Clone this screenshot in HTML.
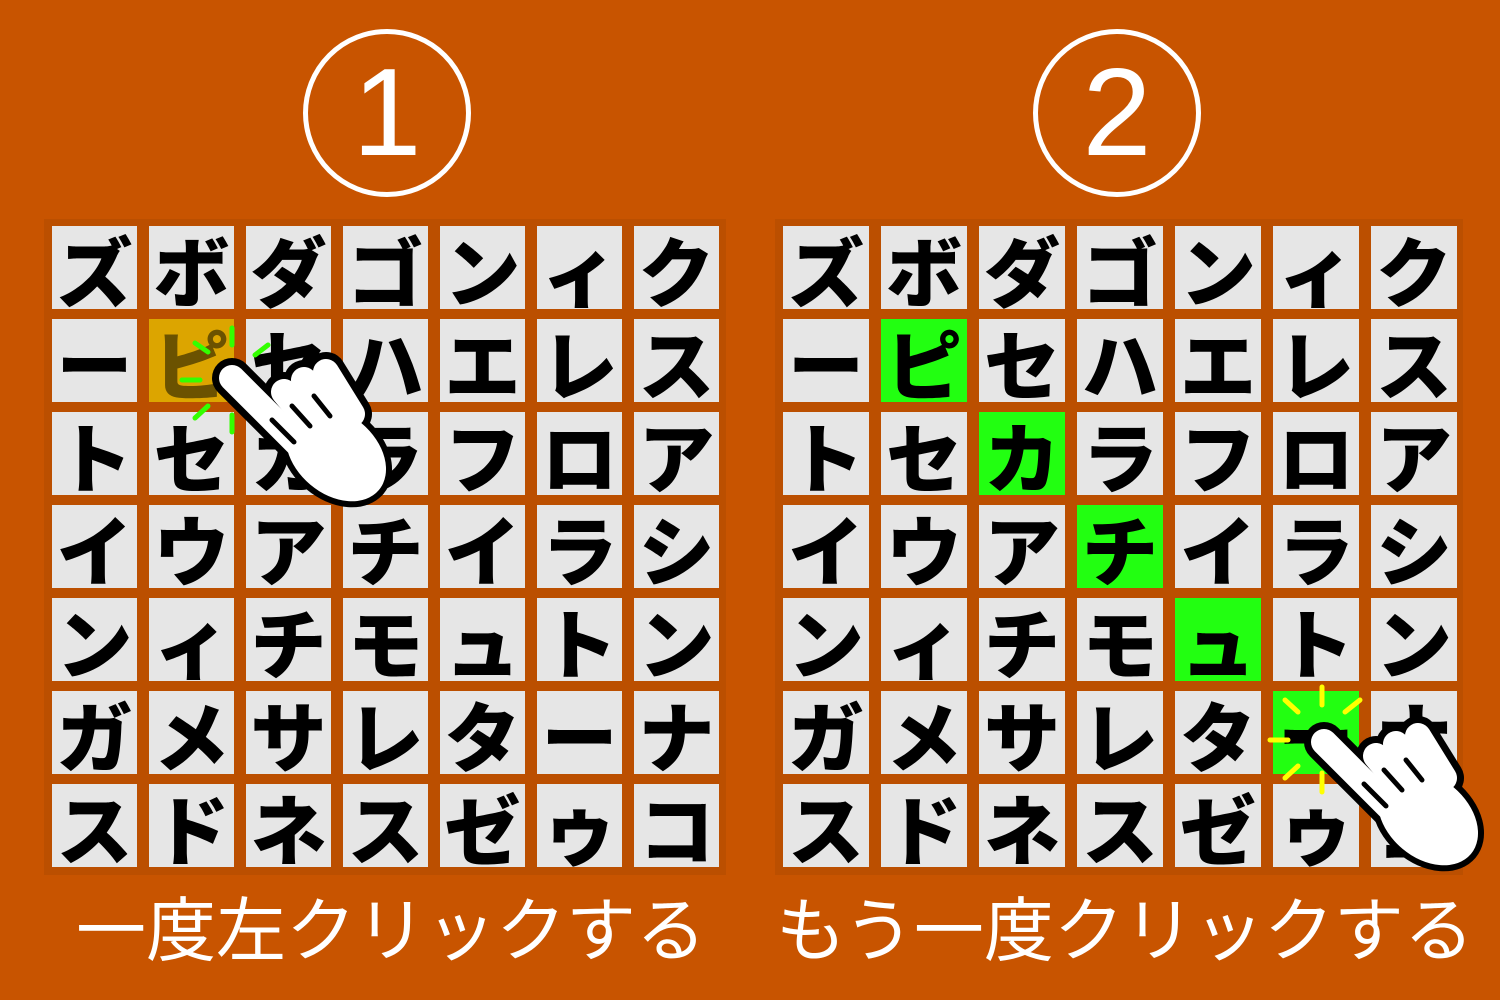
<!DOCTYPE html>
<html><head><meta charset="utf-8"><style>
*{margin:0;padding:0;box-sizing:border-box}
body{width:1500px;height:1000px;background:#C85400;position:relative;overflow:hidden;font-family:"Liberation Sans","Noto Sans CJK JP",sans-serif}
.panel{position:absolute;background:#BB4F00}
.grid{position:absolute;display:grid;grid-template-columns:repeat(7,85px);grid-template-rows:repeat(7,83px);column-gap:12px;row-gap:10px}
.g2{grid-template-columns:repeat(7,86px)}
.c{background:#e6e6e6;display:flex;align-items:center;justify-content:center;font-family:"Noto Sans CJK JP",sans-serif;font-weight:900;font-size:76px;color:#000;line-height:1}
.y{background:#DCA500;color:#6b5200}
.gr{background:#22ff11}
.circ{position:absolute;width:168px;height:168px;border:5px solid #fff;border-radius:50%;color:#fff;font-size:124px;display:flex;align-items:center;justify-content:center;line-height:1}
.cap{position:absolute;top:886px;color:#fff;font-family:"Noto Sans CJK JP",sans-serif;font-size:70px;line-height:80px;white-space:nowrap}
svg{position:absolute;left:0;top:0}
</style></head><body>
<div class="circ" style="left:303px;top:29px">1</div>
<div class="circ" style="left:1033px;top:29px">2</div>
<div class="panel" style="left:44px;top:219px;width:682px;height:656px"></div>
<div class="panel" style="left:775px;top:219px;width:688px;height:656px"></div>
<div class="grid" style="left:52px;top:226px">
<div class="c">ズ</div><div class="c">ボ</div><div class="c">ダ</div><div class="c">ゴ</div><div class="c">ン</div><div class="c">ィ</div><div class="c">ク</div>
<div class="c">ー</div><div class="c y">ピ</div><div class="c">セ</div><div class="c">ハ</div><div class="c">エ</div><div class="c">レ</div><div class="c">ス</div>
<div class="c">ト</div><div class="c">セ</div><div class="c">カ</div><div class="c">ラ</div><div class="c">フ</div><div class="c">ロ</div><div class="c">ア</div>
<div class="c">イ</div><div class="c">ウ</div><div class="c">ア</div><div class="c">チ</div><div class="c">イ</div><div class="c">ラ</div><div class="c">シ</div>
<div class="c">ン</div><div class="c">ィ</div><div class="c">チ</div><div class="c">モ</div><div class="c">ュ</div><div class="c">ト</div><div class="c">ン</div>
<div class="c">ガ</div><div class="c">メ</div><div class="c">サ</div><div class="c">レ</div><div class="c">タ</div><div class="c">ー</div><div class="c">ナ</div>
<div class="c">ス</div><div class="c">ド</div><div class="c">ネ</div><div class="c">ス</div><div class="c">ゼ</div><div class="c">ゥ</div><div class="c">コ</div>
</div>
<div class="grid g2" style="left:783px;top:226px">
<div class="c">ズ</div><div class="c">ボ</div><div class="c">ダ</div><div class="c">ゴ</div><div class="c">ン</div><div class="c">ィ</div><div class="c">ク</div>
<div class="c">ー</div><div class="c gr">ピ</div><div class="c">セ</div><div class="c">ハ</div><div class="c">エ</div><div class="c">レ</div><div class="c">ス</div>
<div class="c">ト</div><div class="c">セ</div><div class="c gr">カ</div><div class="c">ラ</div><div class="c">フ</div><div class="c">ロ</div><div class="c">ア</div>
<div class="c">イ</div><div class="c">ウ</div><div class="c">ア</div><div class="c gr">チ</div><div class="c">イ</div><div class="c">ラ</div><div class="c">シ</div>
<div class="c">ン</div><div class="c">ィ</div><div class="c">チ</div><div class="c">モ</div><div class="c gr">ュ</div><div class="c">ト</div><div class="c">ン</div>
<div class="c">ガ</div><div class="c">メ</div><div class="c">サ</div><div class="c">レ</div><div class="c">タ</div><div class="c gr">ー</div><div class="c">ナ</div>
<div class="c">ス</div><div class="c">ド</div><div class="c">ネ</div><div class="c">ス</div><div class="c">ゼ</div><div class="c">ゥ</div><div class="c">コ</div>
</div>
<div class="cap" style="left:76px">一度左クリックする</div>
<div class="cap" style="left:776px">もう一度クリックする</div>
<svg width="1500" height="1000" viewBox="0 0 1500 1000">
<defs>
<g id="hb">
<line x1="8" y1="8" x2="80" y2="80" stroke-width="40" stroke-linecap="round"/>
<line x1="60" y1="22" x2="90" y2="58" stroke-width="40" stroke-linecap="round"/>
<line x1="80" y1="10" x2="108" y2="48" stroke-width="40" stroke-linecap="round"/>
<line x1="102" y1="2" x2="128" y2="44" stroke-width="40" stroke-linecap="round"/>
<ellipse cx="112" cy="84" rx="56" ry="40" transform="rotate(40 112 84)" stroke-width="12"/>
</g>
<g id="hw">
<line x1="8" y1="8" x2="80" y2="80" stroke-width="26" stroke-linecap="round"/>
<line x1="60" y1="22" x2="90" y2="58" stroke-width="26" stroke-linecap="round"/>
<line x1="80" y1="10" x2="108" y2="48" stroke-width="26" stroke-linecap="round"/>
<line x1="102" y1="2" x2="128" y2="44" stroke-width="26" stroke-linecap="round"/>
<ellipse cx="112" cy="84" rx="56" ry="40" transform="rotate(40 112 84)" stroke-width="0"/>
</g>
<g id="hand">
<use href="#hb" stroke="#000" fill="#000"/>
<use href="#hw" stroke="#fff" fill="#fff"/>
<path d="M48 50 L70 72 M68 36 L86 56 M90 26 L106 46" stroke="#000" stroke-width="5" stroke-linecap="round" fill="none"/>
</g>
</defs>
<g stroke="#33ff00" stroke-width="5" stroke-linecap="round">
<line x1="232" y1="328" x2="232" y2="345"/><line x1="255" y1="355" x2="268" y2="345"/>
<line x1="195" y1="343" x2="208" y2="352"/><line x1="182" y1="380" x2="200" y2="380"/>
<line x1="195" y1="418" x2="208" y2="406"/><line x1="232" y1="415" x2="232" y2="432"/>
</g>
<g transform="translate(224,370)"><use href="#hand"/></g>
<g stroke="#ffff00" stroke-width="5" stroke-linecap="round">
<line x1="1322" y1="687" x2="1322" y2="705"/><line x1="1345" y1="712" x2="1360" y2="700"/>
<line x1="1285" y1="700" x2="1298" y2="712"/><line x1="1270" y1="740" x2="1288" y2="740"/>
<line x1="1285" y1="778" x2="1298" y2="766"/><line x1="1322" y1="773" x2="1322" y2="792"/>
</g>
<g transform="translate(1316,734)"><use href="#hand"/></g>
</svg>
</body></html>
